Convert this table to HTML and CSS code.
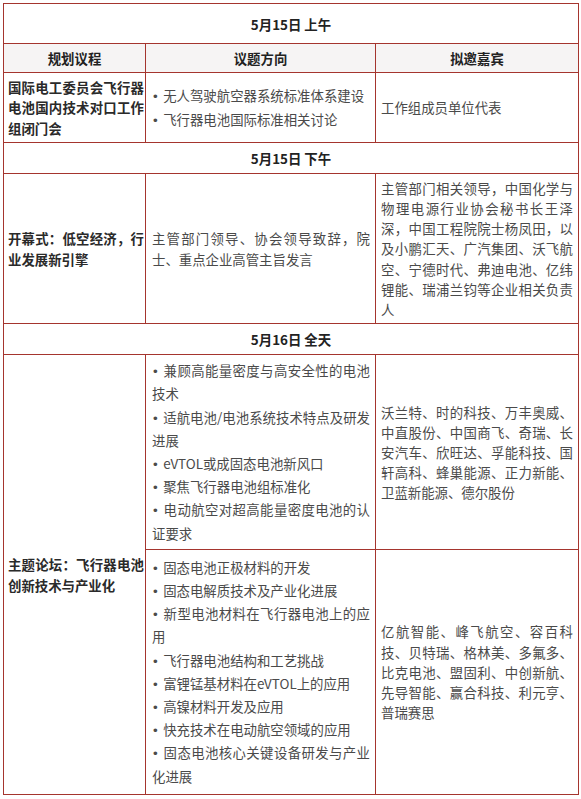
FILE: index.html
```html
<!DOCTYPE html>
<html lang="zh-CN">
<head>
<meta charset="utf-8">
<title>议程</title>
<link rel="stylesheet" href="styles.css">
</head>
<body>
<table class="agenda">
  <colgroup><col class="c1"><col class="c2"><col class="c3"></colgroup>
  <tr class="date first"><td colspan="3">5月15日 上午</td></tr>
  <tr class="head"><th>规划议程</th><th>议题方向</th><th>拟邀嘉宾</th></tr>
  <tr class="r1">
    <td class="topic">国际电工委员会飞行器电池国内技术对口工作组闭门会</td>
    <td class="dir">
      <ul class="bullets">
        <li><span class="dot">•</span>无人驾驶航空器系统标准体系建设</li>
        <li><span class="dot">•</span>飞行器电池国际标准相关讨论</li>
      </ul>
    </td>
    <td class="guest">工作组成员单位代表</td>
  </tr>
  <tr class="date"><td colspan="3">5月15日 下午</td></tr>
  <tr class="r2">
    <td class="topic">开幕式：低空经济，行业发展新引擎</td>
    <td class="dir plain">主管部门领导、协会领导致辞，院士、重点企业高管主旨发言</td>
    <td class="guest">主管部门相关领导，中国化学与物理电源行业协会秘书长王泽深，中国工程院院士杨凤田，以及小鹏汇天、广汽集团、沃飞航空、宁德时代、弗迪电池、亿纬锂能、瑞浦兰钧等企业相关负责人</td>
  </tr>
  <tr class="date"><td colspan="3">5月16日 全天</td></tr>
  <tr class="r3">
    <td class="topic" rowspan="2">主题论坛：飞行器电池创新技术与产业化</td>
    <td class="dir">
      <ul class="bullets">
        <li><span class="dot">•</span>兼顾高能量密度与高安全性的电池技术</li>
        <li><span class="dot">•</span>适航电池/电池系统技术特点及研发进展</li>
        <li><span class="dot">•</span>eVTOL或成固态电池新风口</li>
        <li><span class="dot">•</span>聚焦飞行器电池组标准化</li>
        <li><span class="dot">•</span>电动航空对超高能量密度电池的认证要求</li>
      </ul>
    </td>
    <td class="guest">沃兰特、时的科技、万丰奥威、中直股份、中国商飞、奇瑞、长安汽车、欣旺达、孚能科技、国轩高科、蜂巢能源、正力新能、卫蓝新能源、德尔股份</td>
  </tr>
  <tr class="r4">
    <td class="dir">
      <ul class="bullets">
        <li><span class="dot">•</span>固态电池正极材料的开发</li>
        <li><span class="dot">•</span>固态电解质技术及产业化进展</li>
        <li><span class="dot">•</span>新型电池材料在飞行器电池上的应用</li>
        <li><span class="dot">•</span>飞行器电池结构和工艺挑战</li>
        <li><span class="dot">•</span>富锂锰基材料在eVTOL上的应用</li>
        <li><span class="dot">•</span>高镍材料开发及应用</li>
        <li><span class="dot">•</span>快充技术在电动航空领域的应用</li>
        <li><span class="dot">•</span>固态电池核心关键设备研发与产业化进展</li>
      </ul>
    </td>
    <td class="guest">亿航智能、峰飞航空、容百科技、贝特瑞、格林美、多氟多、比克电池、盟固利、中创新航、先导智能、赢合科技、利元亨、普瑞赛思</td>
  </tr>
</table>
</body>
</html>
```
FILE: styles.css
```css
html, body {
  margin: 0;
  padding: 0;
  background: #ffffff;
}
body {
  padding: 3px;
  font-family: "Noto Sans CJK SC", "Noto Sans", sans-serif;
  font-size: 13.4px;
  color: #4a4a4a;
}
.agenda {
  border-collapse: collapse;
  table-layout: fixed;
  width: 575px;
}
.c1 { width: 142px; }
.c2 { width: 230px; }
.c3 { width: 203px; }
.agenda td, .agenda th {
  border: 1px solid #a5352e;
  padding: 4px 5px;
  vertical-align: middle;
  line-height: 20.2px;
  text-align: justify;
}
.date td {
  text-align: center;
  font-weight: bold;
  color: #222222;
  height: 22px;
}
.date.first td {
  height: 30px;
  padding-top: 5px;
}
.head th {
  background: #f6f4f4;
  font-weight: bold;
  color: #222222;
  text-align: center;
  height: 20px;
}
.topic {
  font-weight: bold;
  color: #2a2a2a;
  line-height: 19.5px;
}
.agenda td.topic {
  padding-left: 4px;
  padding-right: 1px;
}
.agenda td.dir {
  padding-left: 6px;
  padding-right: 5px;
}
.bullets {
  list-style: none;
  margin: 0;
  padding: 0;
  line-height: 23.2px;
}
.dot {
  line-height: 1px;
  font-family: "Liberation Sans", sans-serif;
  margin-left: 1px;
  margin-right: 5.5px;
}
.r1 td { height: 60px; }
.r3 td.dir, .r3 td.guest { height: 183px; }
.r4 td { height: 236px; }
```
